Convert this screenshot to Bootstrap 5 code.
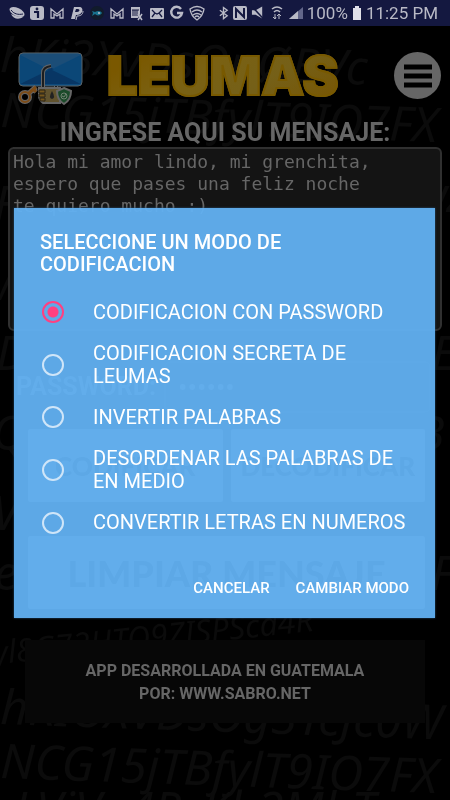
<!DOCTYPE html>
<html lang="es">
<head>
<meta charset="utf-8">
<meta name="viewport" content="width=device-width, initial-scale=1">
<title>Leumas</title>
<link href="https://cdn.jsdelivr.net/npm/bootstrap@5.3.0/dist/css/bootstrap.min.css" rel="stylesheet">
<style>
body{background:#000;color:#666;font-family:Roboto,sans-serif}
.backdrop-letters{position:fixed;inset:0;width:100%;height:100%;z-index:-1;fill:#0b0b0b;font-family:"Noto Sans",sans-serif;font-style:italic;font-weight:400}
.statusbar{background:#141840;color:#b9bac6;height:26px;font-size:17px;line-height:28px;padding:0 12px 0 9px}
.statusbar svg{flex:none;fill:#b9bac6;stroke:none}
.notices,.system{gap:4px}
.brandbar{height:93px;padding:6px 9px 0 17px}
.brand-name{font:900 54px/60px Inter,sans-serif;margin:0 0 0 24px;background:linear-gradient(150deg,#7a5800 15%,#7a6112 40%,#756018 65%,#775400);-webkit-background-clip:text;background-clip:text;-webkit-text-fill-color:transparent;-webkit-text-stroke:2px #785900}
.menu-btn{width:47px;height:47px;background:#666}
.field-title{font-size:25px;line-height:28px;font-weight:700}
.message{background:#141414;color:#666;border:2px solid #303030;border-radius:6px;height:184px;padding:2px 3px;font:18px/22px "DejaVu Sans Mono",monospace;resize:none;overflow:hidden}
.message:focus{background:#141414;color:#666}
.secret-row{margin:30px 3px 16px 8px}
.secret{background:#060606;color:#666;border:2px solid #151515;height:52px;font-size:28px}
.plates{margin:0 17px 0 20px}
.plate{background:#666;color:#000;border-radius:2px;height:73px;font:900 26px/40px Lato,sans-serif}
.plate-wide{font-size:36px;margin-top:34px}
.credits{background:#070707;height:83px;margin:31px 25px 0;font-size:16px;line-height:23px;font-weight:700}
.overlay{position:fixed;inset:26px 0 0;padding:0 15px 0 14px}
.dialog-box{background:rgba(98,177,242,.95);color:#fff;padding:23px 26px 12px;box-shadow:0 0 2px #2a5378}
.dialog-title{font-size:20px;line-height:22px;font-weight:500;margin:0 0 11px}
.modes{min-height:263px}
.mode-row{flex:1 1 0}
.modes label{font-size:20px;line-height:23px;flex:1}
.modes .form-check-input{width:22px;height:22px;margin:0 29px 0 2px;background:transparent;border:2px solid #cfe5f8;box-shadow:none;flex:none}
.modes .form-check-input:checked{border-color:#ff4081;background:radial-gradient(circle,#ff4081 0 5px,transparent 6px)}
.dialog-actions{margin-top:21px;gap:26px}
.dialog-actions .btn{color:#fff;font-size:15px;line-height:36px;font-weight:500;border:0}
</style>
<script src="https://cdn.jsdelivr.net/npm/bootstrap@5.3.0/dist/js/bootstrap.bundle.min.js"></script>
</head>
<body>
<svg class="backdrop-letters" viewBox="0 0 450 800" preserveAspectRatio="xMidYMid slice" aria-hidden="true">
<g font-size="48">
<text x="0" y="72" transform="rotate(2 0 72)">hKj3XvDsOpØBVc</text>
<text x="0" y="127" transform="rotate(2 0 127)">NCG15jTBfylT9IO7FX</text>
<text x="-6" y="220">FvR8kQ2mZd7HyTpW4</text>
<text x="-10" y="300">W2s9LxVbN5qJtYc8o</text>
<text x="-4" y="370">Dp4GhKz6RnMf3BwJE</text>
<text x="-8" y="450">Q9-rVtX2cLs7HpNz3B</text>
<text x="-8" y="530">Vy5KdGm8TqZw4JfRJ</text>
<text x="-6" y="590">eN7bXsHc2PvLk9Gt1F</text>
<text x="0" y="724" transform="rotate(2 0 724)">hKIOXVDsOg3TcJc0W</text>
<text x="0" y="778" transform="rotate(2 0 778)">NCG15jTBfylT9IO7FX</text>
<text x="14" y="826">LViVo4RsKb2MhT</text>
</g>
<g font-size="32"><text x="-6" y="664" transform="rotate(-6 0 664)">yl8G72HTQ9ZISPSca4R</text></g>
</svg>

<div class="statusbar d-flex justify-content-between align-items-center">
<div class="notices d-flex align-items-center" aria-label="Notificaciones">
<svg width="16" height="16" viewBox="0 0 16 16"><ellipse cx="8" cy="7" rx="8" ry="4" transform="rotate(25 8 7)"/><path d="M2 9c2 5 8 6 12 3-4 0-8-1-12-3z"/><path d="M2 5c3 4 7 5 12 4" fill="none" stroke="#141840"/></svg>
<svg width="16" height="16" viewBox="0 0 16 16"><rect x="1" y="1" width="14" height="14" rx="3"/><circle cx="8" cy="4" r="1.4" fill="#141840"/><path d="M5 7h4v6" fill="none" stroke="#141840" stroke-width="2.2"/></svg>
<svg width="16" height="16" viewBox="0 0 16 16"><path d="M2 13V4l6 5 6-5v9h-3V9l-3 2-3-2v4z" fill="none" stroke="#b9bac6" stroke-width="1.3"/></svg>
<svg width="16" height="16" viewBox="0 0 16 16"><path d="M5 2h5c3 0 4 2 3 5-1 2-3 3-5 3H7l-1 4H2z"/><path d="M14 6c0 4-3 5-6 5l-1 4" stroke="#b9bac6" fill="none"/><path d="M7 4h2c2 0 2 3-1 3H6z" fill="#141840"/></svg>
<svg width="16" height="16" viewBox="0 0 16 16"><circle cx="8" cy="8" r="7" fill="#111b2b"/><path d="M3 6l3 1c3-2 6-1 7 1-2 3-5 3-7 1l-3 2 1-3z" fill="#18718d"/><circle cx="10" cy="8" r="1" fill="#b9bac6"/></svg>
<svg width="16" height="16" viewBox="0 0 16 16"><path d="M2 13V4l6 5 6-5v9h-3V9l-3 2-3-2v4z" fill="none" stroke="#b9bac6" stroke-width="1.3"/></svg>
<svg width="16" height="16" viewBox="0 0 16 16"><path d="M2 2h9v7l-2 4H2z"/><path d="M4 5v6M6 5v6M8 5v6M3 5h7" stroke="#141840"/><path d="M9 9l4 6m0-6l-4 6" stroke="#b9bac6" stroke-width="1.5"/></svg>
<svg width="16" height="16" viewBox="0 0 16 16"><rect x="1" y="3" width="14" height="11" rx="1"/><path d="M3 5l3 3-3 4m10-7l-3 3 3 4M6 8l2 1 2-1" fill="none" stroke="#141840" stroke-width="1.3"/></svg>
<svg width="16" height="16" viewBox="0 0 16 16"><path d="M12 4a5.4 5.4 0 1 0 1 4H8" fill="none" stroke="#b9bac6" stroke-width="2.4"/></svg>
<svg width="16" height="16" viewBox="0 0 16 16"><path d="M1 4q7-5 14 0-1 7-7 11-6-4-7-11zM3 7q5-4 10 0M4 10q4-3 8 0M6 12q2-2 4 0" fill="none" stroke="#b9bac6" stroke-width="1.4"/></svg>
</div>
<div class="system d-flex align-items-center">
<svg width="11" height="16" viewBox="0 0 12 16"><path d="M2 5l8 6-4 3V2l4 3-8 6" fill="none" stroke="#b9bac6" stroke-width="1.5"/></svg>
<svg width="14" height="16" viewBox="0 0 14 16"><rect y="1" width="14" height="14" rx="2"/><path d="M3 13V4l8 8V3" fill="none" stroke="#141840" stroke-width="2"/></svg>
<svg width="14" height="16" viewBox="0 0 15 16"><path d="M1 5h4l7-4v13L5 10H1z"/><path d="M1 1l13 14" stroke="#141840" stroke-width="1.6"/></svg>
<svg width="16" height="16" viewBox="1 0 16 16"><path d="M4 4q5-4 10 0M6 7q3-3 6 0" fill="none" stroke="#b9bac6" stroke-width="1.6"/><path d="M7 9v5m-2-2l2 2 1-2m3 2V9m-2 2l2-2 2 2" fill="none" stroke="#b9bac6"/></svg>
<svg width="14" height="16" viewBox="0 0 14 16"><path d="M0 14L14 2v12z" fill="#62668a"/><path d="M0 14l9-8v8z"/></svg>
<span>100%</span>
<svg width="10" height="16" viewBox="0 0 10 16"><path d="M1 3h2V1h4v2h2v12H1z" fill="#e0e0e8"/></svg>
<span>11:25 PM</span>
</div>
</div>

<main>
<header class="brandbar d-flex align-items-center">
<svg width="66" height="62" viewBox="0 -6 66 62" role="img" aria-label="Logo Leumas">
<rect x="2" y="2" width="63" height="33" rx="4" fill="#0d4a7c" stroke="#5b6266"/>
<path d="M3 4l30 15L64 4q-1-1-3-1H6z" fill="#1b4d77"/><path d="M3 33l30-17 31 17z" fill="#083664"/><path d="M3 4l29 15L3 33z" fill="#0b4777"/><path d="M64 4L35 19l29 14z" fill="#0b4777"/>
<path d="M26 42V22q0-6 8-7m5 20v6" fill="none" stroke="#666" stroke-width="4"/><path d="M26 42V22q0-6 8-7m5 20v6" fill="none" stroke="#1b1d1f" stroke-width="2"/>
<path d="M22 37h21v15H26q-4-3-4-8z" fill="#61532e" stroke="#666" stroke-width="2"/><path d="M22 39h6v3h-6zm0 4h6v3h-6zm1 4h5v3h-5z" fill="#75561c" stroke="#2b2518"/><path d="M35 40q4 7 0 8-4-1 0-8" fill="#222"/>
<path d="M47 37l7 3q0 9-7 13-7-4-7-13z" fill="#1b4a29" stroke="#666" stroke-width="2"/><circle cx="47" cy="45" r="3" fill="none" stroke="#718071"/><path d="M45 45l2 1 2-3" fill="none" stroke="#718071"/>
<path d="M11 43l8-7m-3 2l3 3" stroke="#666" stroke-width="5"/><circle cx="8" cy="46" r="5" fill="none" stroke="#666" stroke-width="4"/><path d="M11 43l8-7m-3 2l3 3" stroke="#7c4c18" stroke-width="3"/><circle cx="8" cy="46" r="5" fill="none" stroke="#7c4c18" stroke-width="2"/>
</svg>
<h1 class="brand-name">LEUMAS</h1>
<button class="menu-btn btn rounded-circle p-0 ms-auto d-flex align-items-center justify-content-center border-0" type="button" aria-label="Menú"><svg width="28" height="24" viewBox="0 0 28 24"><path d="M0 3h28M0 12h28M0 21h28" stroke="#000" stroke-width="5"/></svg></button>
</header>
<form class="px-2">
<label class="field-title d-block text-center" for="message">INGRESE AQUI SU MENSAJE:</label>
<textarea class="message form-control" id="message">Hola mi amor lindo, mi grenchita,
espero que pases una feliz noche
te quiero mucho :)</textarea>
<div class="secret-row d-flex align-items-center gap-2 pe-2"><label class="field-title" for="secret">PASSWORD:</label><input class="secret form-control" id="secret" type="password" value="123456"></div>
<div class="plates">
<div class="row g-0 gap-2"><div class="col"><button class="plate btn w-100 p-0" type="button">CODIFICAR</button></div><div class="col"><button class="plate btn w-100 p-0" type="button">DECODIFICAR</button></div></div>
<button class="plate plate-wide btn w-100 p-0" type="button">LIMPIAR MENSAJE</button>
</div>
</form>
<footer class="credits d-flex flex-column justify-content-center text-center"><span>APP DESARROLLADA EN GUATEMALA</span><span>POR: WWW.SABRO.NET</span></footer>
</main>

<div class="overlay d-flex align-items-center">
<form class="dialog-box w-100" role="dialog" aria-labelledby="dialog-title">
<h2 class="dialog-title" id="dialog-title">SELECCIONE UN MODO DE<br>CODIFICACION</h2>
<div class="modes d-flex flex-column">
<div class="mode-row d-flex align-items-center"><input class="form-check-input" type="radio" name="mode" id="m1" checked><label for="m1">CODIFICACION CON PASSWORD</label></div>
<div class="mode-row d-flex align-items-center"><input class="form-check-input" type="radio" name="mode" id="m2"><label for="m2">CODIFICACION SECRETA DE LEUMAS</label></div>
<div class="mode-row d-flex align-items-center"><input class="form-check-input" type="radio" name="mode" id="m3"><label for="m3">INVERTIR PALABRAS</label></div>
<div class="mode-row d-flex align-items-center"><input class="form-check-input" type="radio" name="mode" id="m4"><label for="m4">DESORDENAR LAS PALABRAS DE EN MEDIO</label></div>
<div class="mode-row d-flex align-items-center"><input class="form-check-input" type="radio" name="mode" id="m5"><label for="m5">CONVERTIR LETRAS EN NUMEROS</label></div>
</div>
<div class="dialog-actions d-flex justify-content-end"><button class="btn p-0" type="button">CANCELAR</button><button class="btn p-0" type="button">CAMBIAR MODO</button></div>
</form>
</div>
</body>
</html>
